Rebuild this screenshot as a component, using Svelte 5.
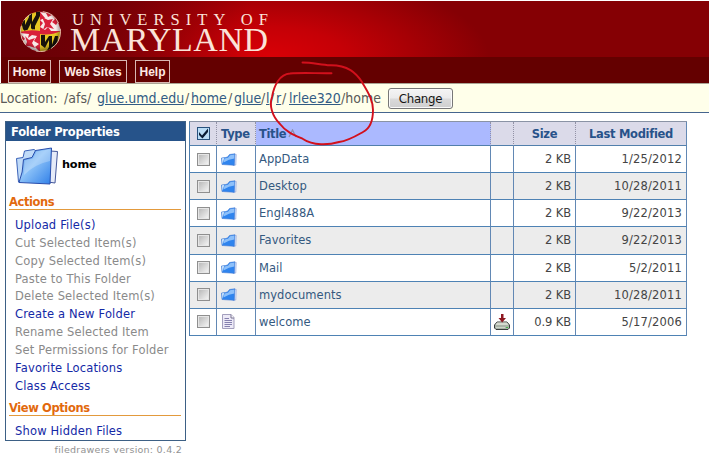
<script>
  const actions = [
    ['Upload File(s)', true],
    ['Cut Selected Item(s)', false],
    ['Copy Selected Item(s)', false],
    ['Paste to This Folder', false],
    ['Delete Selected Item(s)', false],
    ['Create a New Folder', true],
    ['Rename Selected Item', false],
    ['Set Permissions for Folder', false],
    ['Favorite Locations', true],
    ['Class Access', true]
  ];
  const files = [
    { name: 'AppData', size: '2 KB', date: '1/25/2012' },
    { name: 'Desktop', size: '2 KB', date: '10/28/2011' },
    { name: 'Engl488A', size: '2 KB', date: '9/22/2013' },
    { name: 'Favorites', size: '2 KB', date: '9/22/2013' },
    { name: 'Mail', size: '2 KB', date: '5/2/2011' },
    { name: 'mydocuments', size: '2 KB', date: '10/28/2011' },
    { name: 'welcome', size: '0.9 KB', date: '5/17/2006', doc: true }
  ];
  const crumbs = [
    { text: 'Location:', w: 64 },
    { text: '/afs/', w: 33 },
    { text: 'glue.umd.edu', w: 88, link: true },
    { text: '/', w: 6 },
    { text: 'home', w: 37, link: true },
    { text: '/', w: 6 },
    { text: 'glue', w: 27, link: true },
    { text: '/', w: 5 },
    { text: 'l', w: 4, link: true },
    { text: '/', w: 6 },
    { text: 'r', w: 6, link: true },
    { text: '/', w: 7 },
    { text: 'lrlee320', w: 52, link: true },
    { text: '/home', w: 46 }
  ];
</script>

<div class="page">
  <header>
    <div class="banner">
      <svg width="280" height="56" viewBox="1 1 280 56">
        <defs>
          <clipPath id="globe"><circle cx="40.5" cy="31.5" r="20" /></clipPath>
          <clipPath id="q1"><path d="M20 11H40V30Q30 28 20 32Z" /></clipPath>
          <clipPath id="q4"><path d="M40 34Q50 36 61 31V52H40Z" /></clipPath>
          <radialGradient id="shade" cx=".48" cy=".45" r=".55">
            <stop offset=".72" stop-color="#000" stop-opacity="0" />
            <stop offset="1" stop-color="#000" stop-opacity=".45" />
          </radialGradient>
        </defs>
        <g clip-path="url(#globe)">
          <rect x="20" y="11" width="41" height="41" fill="#d9203a" />
          <path d="M20 11H40V31Q30 29 20 32Z M40 34Q50 36 61 31V52H40Z" fill="#e7c823" />
          <g clip-path="url(#q1)" fill="#17130b">
            <path d="M20 17l5-2v10l4-8v-6h3v11l4-7v-4h4v5l-5 10v8l-4-6v-5l-4 8v4l-4-6z" />
          </g>
          <g clip-path="url(#q4)" fill="#17130b">
            <path d="M41 35h4v7l4-6h3v9l3-9h3l-1 11 4-7v12H46l3-5v-7l-4 8-4-3z" />
          </g>
          <path d="M40 12l6 1 2 4 4-2 3 4-3 3 4 3 2-3 3 9H51l-3-4-3 3-5-3 3-4-3-3 5-2z" fill="#f8e9e8" />
          <path d="M42 17l6 3 5-1-3 5 4 5-7-2-4 3 2-6z" fill="#d9203a" />
          <path d="M20 33l9 1-1 4 4-3 5 1-3 5 5 3-4 3 5 5-8-2-3-3-3 2-5-7 4-3z" fill="#f8e9e8" />
          <path d="M25 36l4 4 6-2-3 5 3 5-6-2-4 1 2-5z" fill="#d9203a" />
          <circle cx="40.5" cy="31.5" r="20.5" fill="url(#shade)" />
        </g>
        <circle cx="40.5" cy="31.5" r="20" fill="none" stroke="#e9c6b2" stroke-width=".9" stroke-dasharray="20 6 10 12" />
        <g fill="#fbe3d8" font-family="'Liberation Serif', serif">
          <text x="72" y="24.5" font-size="16.5" textLength="196">UNIVERSITY OF</text>
          <text x="70" y="50.5" font-size="34" textLength="198">MARYLAND</text>
        </g>
      </svg>
    </div>
    <nav><span class="n1">Home</span><span class="n2">Web Sites</span><span class="n3">Help</span></nav>
  </header>

  <div class="location">
    {#each crumbs as c}<span class:link={c.link} style="width:{c.w}px">{c.text}</span>{/each}
    <button>Change</button>
  </div>

  <main>
    <aside>
      <div class="panel">
        <h2>Folder Properties</h2>
        <div class="current">
          <svg width="44" height="38" viewBox="0 0 44 38">
            <defs>
              <linearGradient id="big" x1="0" y1="0" x2="1" y2="1">
                <stop offset="0" stop-color="#4a92e6" /><stop offset=".45" stop-color="#8cc2f8" /><stop offset="1" stop-color="#2f7fe8" />
              </linearGradient>
            </defs>
            <path d="M35 4L42.500 4.500 40 36 33 35Z" fill="#e6ebf8" stroke="#44579a" stroke-linejoin="round" />
            <path d="M1.500 11.500L8 10.500 9.500 4 19 2.500 24 6 10 34 3.500 35Z" fill="#c0dbf8" stroke="#3a62b8" stroke-linejoin="round" />
            <path d="M8.500 12.500L17 10.500 20.500 3.500 36.500 1 35 37 4 35.500Q8 26 8.500 12.500Z" fill="url(#big)" stroke="#2a4eac" stroke-linejoin="round" />
            <path d="M9.500 13.500L18 11.500 21.500 4.500 35.500 2.200 35 14Q20 17 9 28Z" fill="#fff" opacity=".25" />
          </svg>
          <b>home</b>
        </div>
        <h3>Actions</h3>
        <ul>
          {#each actions as [label, on]}<li class:on><span>{label}</span></li>{/each}
        </ul>
        <h3 class="second">View Options</h3>
        <ul><li class="on">Show Hidden Files</li></ul>
      </div>
      <p>filedrawers version: 0.4.2</p>
    </aside>

    <div class="grid">
      <div class="row head">
        <div class="c1">
          <svg width="13" height="13" viewBox="0 0 13 13"><rect x=".5" y=".5" width="12" height="12" fill="#b9dcf6" stroke="#27517d" /><path d="M2 5L5 8.500 11 1.500V5L5.500 11.500 2 8Z" fill="#091b35" /></svg>
        </div>
        <div class="c2">Type</div>
        <div class="c3">Title<svg class="sort" width="9" height="9" viewBox="0 0 9 9"><path d="M1 8L4.500 1 8 8" fill="none" stroke="#8b8fae" stroke-width="1.300" /></svg></div>
        <div class="c4"></div>
        <div class="c5">Size</div>
        <div class="c6">Last Modified</div>
      </div>
      {#each files as f, i}
        <div class="row" class:alt={i % 2 === 1}>
          <div class="c1"><i class="box"></i></div>
          <div class="c2">
            {#if f.doc}
              <svg class="doc" width="13" height="15" viewBox="0 0 13 15"><path d="M.5.5H9L12 3.500V14.500H.5Z" fill="#edeaf7" stroke="#a39fbd" /><path d="M9 .5V4H12" fill="#fff" stroke="#77718f" /><path d="M2.500 4.500H7M2.500 6.500H10M2.500 8.500H10M2.500 10.500H10M2.500 12.500H8" stroke="#8580ae" /></svg>
            {:else}
              <svg width="16" height="13" viewBox="0 0 16 13"><path d="M13 1L15.300 1.500 14.800 12 12 12.500Z" fill="#d9e4fa" stroke="#8fa3d8" stroke-width=".6" /><path d="M.5 5L4.500 4.500 6.500 4 8.500 1.500 13.800.8 13.300 12.300 1 11.500Z" fill="#2f84ee" stroke="#3f78d4" stroke-width=".6" stroke-linejoin="round" /><path d="M3.500 5.500L7 4.800 9 2.300 13.300 1.600V5.500Q8 6 2.500 9.500Z" fill="#a5d0fd" opacity=".8" /><path d="M.9 5.300L3.200 5 1.500 11Z" fill="#cde3fb" /></svg>
            {/if}
          </div>
          <div class="c3">{f.name}</div>
          <div class="c4">
            {#if f.doc}
              <svg width="16" height="16" viewBox="0 0 16 16"><path d="M3 8H13L15.500 11V14L14 15.500H2L.5 14V11Z" fill="#a9b3a7" stroke="#272b2b" stroke-width=".9" /><path d="M3 8.500H13L14.500 11H1.500Z" fill="#d5dad0" /><path d="M2 13.500H11" stroke="#cbd3c8" /><path d="M12 13.500H14" stroke="#43b649" /><path d="M7 0H9.500V4H12L8.200 8.500 4.500 4H7Z" fill="#8d1720" /></svg>
            {/if}
          </div>
          <div class="c5">{f.size}</div>
          <div class="c6">{f.date}</div>
        </div>
      {/each}
    </div>
  </main>

  <svg class="mark" width="120" height="100" viewBox="260 55 120 100">
    <path d="M302.500 62.500C311 62.500 320 64.500 330 65.300C348 65 356 73 362 82C367 91 373 99 373 110C373 120 371 128 363 132C356 136 348 141 339 142C329 145 313 146 303 139C294 135 286 132 280 124C272 116 269 105 272 97C274 85 280 74 290 73.500C303 72.500 318 73.500 331.500 73.200" fill="none" stroke="#d2101c" stroke-width="1.900" stroke-linecap="round" />
  </svg>
</div>

<style>
  :global(body) { background: #fff; overflow: hidden; }
  .page { position: relative; width: 710px; height: 472px; background: #fff; font-family: 'DejaVu Sans', Verdana, sans-serif; font-size: 11px; overflow: hidden; }
  header { margin: 1px 1px 0; height: 82px; background: #640000; }
  .banner {
    height: 56px;
    background:
      linear-gradient(90deg, #690006 0, rgba(105, 0, 6, .8) 90px, rgba(130, 0, 4, 0) 250px),
      radial-gradient(ellipse 220px 85px at 268px 56px, #d90006 0, #c50006 35%, #a80005 65%, #850004 100%);
  }
  .banner svg { display: block; }
  nav { display: flex; gap: 8px; padding: 3px 0 0 7px; }
  nav span { box-sizing: border-box; height: 23px; border: 1px solid #d8b8b3; color: #ffe9e4; font: bold 12px/22px 'Liberation Sans', Arial, sans-serif; text-align: center; white-space: nowrap; }
  .n1 { width: 43px; }
  .n2 { width: 68px; }
  .n3 { width: 35px; }
  .location { display: flex; align-items: center; box-sizing: border-box; height: 30px; margin-right: 1px; border-top: 1px solid #aaa494; border-bottom: 1px solid #45658e; background: #ffffea; font: 14px/18px 'DejaVu Sans Condensed', 'DejaVu Sans', sans-serif; color: #5a5a58; white-space: nowrap; }
  .location span { flex: none; }
  .location .link { color: #315b84; text-decoration: underline; }
  button { width: 65px; height: 21px; margin: 0 0 0 1px; padding: 0; border: 1px solid #777; border-radius: 3px; background: linear-gradient(#f4f4f4, #ebebeb 48%, #dadada 52%, #cfcfcf); box-shadow: inset 0 0 0 1px #fafafa; font: 13.100px/17px 'DejaVu Sans Condensed', 'DejaVu Sans', sans-serif; letter-spacing: -.3px; color: #151515; }
  main { display: flex; align-items: flex-start; padding: 8px 0 0 5px; }
  aside { width: 181px; margin-right: 3px; }
  .panel { box-sizing: border-box; height: 320px; border: 1px solid #3d6085; }
  h2 { margin: 0; height: 19px; padding-left: 5px; background: #26538a; color: #fff; font: bold 11.500px/20px 'DejaVu Sans', sans-serif; letter-spacing: -.25px; }
  .current { display: flex; align-items: center; height: 54px; padding: 0 0 0 9px; }
  .current svg { margin-top: -4px; }
  .current b { margin: -8px 0 0 3px; font-size: 11.300px; color: #000; letter-spacing: -.2px; }
  h3 { margin: 0 4px 0 3px; height: 14px; border-bottom: 1px solid #e39a3c; color: #e2690d; font: bold 11.500px/15px 'DejaVu Sans', sans-serif; letter-spacing: -.4px; }
  h3.second { margin-top: 7px; }
  ul { list-style: none; margin: 0; padding: 6px 0 0 9px; }
  li { height: 17.850px; line-height: 18px; font-size: 11.500px; letter-spacing: .17px; color: #8a8a8a; white-space: nowrap; }
  li.on { color: #1429a6; }
  aside p { margin: 2px 4px 0 0; text-align: right; font-size: 9.500px; line-height: 13px; color: #929292; letter-spacing: .25px; }
  .grid { width: 498px; box-sizing: border-box; border-left: 1px solid #4c7dad; border-top: 1px solid #8a93a5; color: #444; }
  .row { display: flex; height: 27.150px; font-size: 11.500px; }
  .row > div { box-sizing: border-box; display: flex; align-items: center; border-right: 1px solid #6288b4; border-bottom: 1px solid #4e82b4; white-space: nowrap; }
  .row.alt { background: #ececec; }
  .row.head { height: 24px; background: #dbdae9; color: #28528a; font-size: 11.500px; font-weight: bold; letter-spacing: -.35px; }
  .row.head > div { border-right: 1px dotted #9292a6; border-bottom-color: #527fac; }
  .row.head > div.c6 { border-right: 1px solid #6288b4; }
  .row > .c1 { width: 27px; justify-content: center; }
  .row > .c2 { width: 39px; padding-left: 4px; }
  .row > .c3 { width: 235px; padding-left: 3px; color: #34597f; letter-spacing: .05px; }
  .row > .c4 { width: 23px; justify-content: center; }
  .row > .c5 { width: 62px; justify-content: flex-end; padding-right: 4px; letter-spacing: -.1px; }
  .row > .c6 { width: 111px; justify-content: flex-end; padding-right: 4px; letter-spacing: .18px; }
  .row.head > .c3 { background: #abb9ff; color: #28528a; letter-spacing: -.35px; }
  .row.head > .c5, .row.head > .c6 { justify-content: center; padding-right: 0; letter-spacing: -.3px; }
  .doc { margin-left: 1px; }
  .sort { margin-left: 2px; }
  .box { width: 11px; height: 11px; border: 1px solid #8f8f8f; background: linear-gradient(135deg, #b4b4b4, #f8f8f8); box-shadow: inset 0 0 0 1px #e6e6e6; }
  .mark { position: absolute; left: 260px; top: 55px; pointer-events: none; }
</style>
